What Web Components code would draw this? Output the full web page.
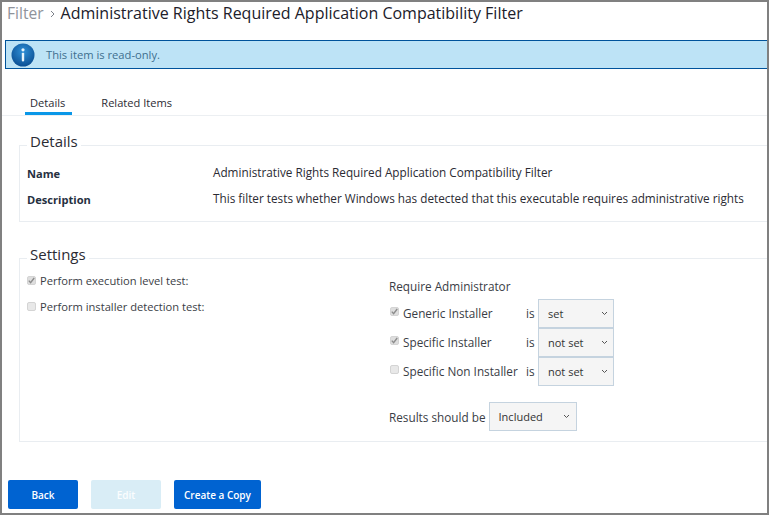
<!DOCTYPE html>
<html>
<head>
<meta charset="utf-8">
<title>Filter</title>
<style>
  html, body { margin: 0; padding: 0; background: #fff; }
  body { font-family: "Open Sans", sans-serif; color: #2b2b33; }
</style>
</head>
<body>
<app-frame>
  <page-title slot="title" parent="Filter">Administrative Rights Required Application Compatibility Filter</page-title>
  <info-banner slot="banner">This item is read-only.</info-banner>
  <tab-bar slot="tabs"></tab-bar>

  <group-box legend="Details">
    <detail-row label="Name">Administrative Rights Required Application Compatibility Filter</detail-row>
    <detail-row label="Description">This filter tests whether Windows has detected that this executable requires administrative rights</detail-row>
  </group-box>

  <group-box legend="Settings">
    <settings-panel></settings-panel>
  </group-box>

  <button-bar slot="actions"></button-bar>
</app-frame>

<script>
const html = String.raw;

function define(name, markup, extra) {
  const tmpl = document.createElement('template');
  tmpl.innerHTML = markup;
  class El extends HTMLElement {
    connectedCallback() {
      if (this.shadowRoot) return;
      const root = this.attachShadow({ mode: 'open' });
      root.appendChild(tmpl.content.cloneNode(true));
      if (extra) extra(this, root);
    }
  }
  customElements.define(name, El);
}

define('app-frame', html`
  <style>
    :host { display: flex; flex-direction: column; box-sizing: border-box; width: 769px; height: 515px;
      border: 2px solid #808080; overflow: hidden; background: #fff; }
    .title { padding: 0 0 0 5px; }
    .banner { margin: 15px 0 0 3px; }
    .tabs { margin-top: 23px; }
    main { display: flex; flex-direction: column; gap: 22px; padding: 15px 0 0 17px; flex: 1; }
    .actions { padding: 0 0 4px 6px; }
  </style>
  <div class="title"><slot name="title"></slot></div>
  <div class="banner"><slot name="banner"></slot></div>
  <div class="tabs"><slot name="tabs"></slot></div>
  <main><slot></slot></main>
  <div class="actions"><slot name="actions"></slot></div>
`);

define('page-title', html`
  <style>
    :host { display: flex; align-items: center; height: 23px; font-size: 16px; line-height: 23px; color: #20202a; white-space: nowrap; }
    .parent { color: #8f939b; font-size: 15.6px; }
    svg { margin: 0 6px 0 6px; }
  </style>
  <span class="parent"></span>
  <svg width="5" height="8" viewBox="0 0 5 8"><path d="M1 1l3 3-3 3" fill="none" stroke="#7d828a" stroke-width="1"/></svg>
  <span><slot></slot></span>
`, (el, root) => { root.querySelector('.parent').textContent = el.getAttribute('parent'); });

define('info-banner', html`
  <style>
    :host { display: flex; align-items: center; box-sizing: border-box; height: 29px; background: #bde3f6;
      border-top: 1px solid #00539b; border-bottom: 1px solid #00539b; border-left: 1px solid #00539b;
      font-size: 11.2px; color: #3d6f8f; }
    svg { margin: 0 11px 0 5px; flex: none; }
  </style>
  <svg width="24" height="24" viewBox="0 0 24 24">
    <defs><radialGradient id="g" cx="50%" cy="35%" r="65%"><stop offset="0" stop-color="#2f8fd6"/><stop offset="1" stop-color="#0b4f94"/></radialGradient></defs>
    <circle cx="12" cy="12" r="11.5" fill="url(#g)"/>
    <circle cx="12" cy="6.8" r="1.6" fill="#e8f4fb"/>
    <rect x="10.8" y="9.8" width="2.4" height="8.6" rx=".8" fill="#e8f4fb"/>
  </svg>
  <span><slot></slot></span>
`);

define('tab-bar', html`
  <style>
    :host { display: flex; height: 24px; box-sizing: border-box; border-bottom: 1px solid #eceff2; padding-left: 23px; gap: 21px; font-size: 11.1px; color: #2b2b33; }
    div { padding: 3px 7px 0 5px; height: 20px; box-sizing: content-box; line-height: 16px; }
    .on { height: 17px; border-bottom: 3px solid #0a97e8; }
    .off { padding-left: 8px; }
  </style>
  <div class="on">Details</div>
  <div class="off">Related Items</div>
`);

define('group-box', html`
  <style>
    :host { display: block; }
    fieldset { margin: 0; padding: 1px 0 9px 7px; border: 1px solid #e9edf1; border-right: 0; min-width: 0; }
    legend { margin-left: 0; padding: 0 3px 8px 3px; font-size: 15px; line-height: 20px; color: #2b2b33; }
  </style>
  <fieldset><legend></legend><slot></slot></fieldset>
`, (el, root) => { root.querySelector('legend').textContent = el.getAttribute('legend'); });

define('detail-row', html`
  <style>
    :host { display: grid; grid-template-columns: 186px 1fr; align-items: center; height: 26px; font-size: 11.75px; color: #2b2b33; white-space: nowrap; }
    b { font-weight: 700; font-size: 11.1px; color: #26303f; }
    span { margin-bottom: 2px; }
  </style>
  <b></b><span><slot></slot></span>
`, (el, root) => { root.querySelector('b').textContent = el.getAttribute('label'); });

define('check-box', html`
  <style>
    :host { display: inline-flex; align-items: center; gap: 4px; line-height: 16px; color: #3a3d45; white-space: nowrap; }
    i { display: block; box-sizing: border-box; width: 9px; height: 9px; border: 1px solid #d4d4d4; border-radius: 2px; background: #e8e8e8; position: relative; top: -1px; }
    svg { display: none; position: absolute; left: 0; top: 0; }
    :host([checked]) svg { display: block; }
    :host([checked]) i { background: #dedede; }
  </style>
  <i><svg width="7" height="7" viewBox="0 0 7 7"><path d="M.8 3.6l1.8 2L6.2 1" fill="none" stroke="#8c8c8c" stroke-width="1.4"/></svg></i>
  <span><slot></slot></span>
`);

define('fake-select', html`
  <style>
    :host { display: inline-flex; align-items: center; justify-content: space-between; box-sizing: border-box; height: 29px;
      border: 1px solid #c5d3df; background: #f5f5f5; font-size: 11px; color: #333; padding: 0 5px 0 9px; }
    svg { flex: none; }
  </style>
  <span><slot></slot></span>
  <svg width="7" height="5" viewBox="0 0 7 5"><path d="M1 1l2.5 2.5L6 1" fill="none" stroke="#555" stroke-width="1"/></svg>
`);

define('settings-panel', html`
  <style>
    :host { display: flex; font-size: 11.75px; color: #3a3d45; padding-bottom: 1px; margin-top: -1px; }
    .left { width: 362px; display: flex; flex-direction: column; gap: 10px; padding-top: 1px; align-items: flex-start; font-size: 11.15px; }
    .right { display: flex; flex-direction: column; padding-top: 6px; }
    .head { height: 16px; line-height: 16px; margin-bottom: 5px; }
    .row { display: grid; grid-template-columns: 137px 12px 76px; align-items: center; height: 29px; }
    .row check-box { margin: 0 0 2px 1px; }
    .row span { margin-bottom: 2px; }
    .last { display: flex; align-items: center; gap: 3px; margin-top: 16px; }
    fake-select.small { width: 76px; }
    fake-select.large { width: 88px; padding-right: 6px; }
  </style>
  <div class="left">
    <check-box checked>Perform execution level test:</check-box>
    <check-box>Perform installer detection test:</check-box>
  </div>
  <div class="right">
    <div class="head">Require Administrator</div>
    <div class="row"><check-box checked>Generic Installer</check-box><span>is</span><fake-select class="small">set</fake-select></div>
    <div class="row"><check-box checked>Specific Installer</check-box><span>is</span><fake-select class="small">not set</fake-select></div>
    <div class="row"><check-box>Specific Non Installer</check-box><span>is</span><fake-select class="small">not set</fake-select></div>
    <div class="last"><span>Results should be</span><fake-select class="large">Included</fake-select></div>
  </div>
`);

define('action-button', html`
  <style>
    :host { display: inline-flex; align-items: center; justify-content: center; box-sizing: border-box; height: 29px; min-width: 70px;
      border-radius: 2px; background: #0063d1; color: #fff; font-size: 10px; font-weight: 600; padding: 0 10px; }
    :host([disabled]) { background: #d9edf6; color: #fbfdfe; }
  </style>
  <slot></slot>
`);

define('button-bar', html`
  <style>
    :host { display: flex; gap: 13px; }
  </style>
  <action-button>Back</action-button>
  <action-button disabled>Edit</action-button>
  <action-button>Create a Copy</action-button>
`);
</script>
</body>
</html>
